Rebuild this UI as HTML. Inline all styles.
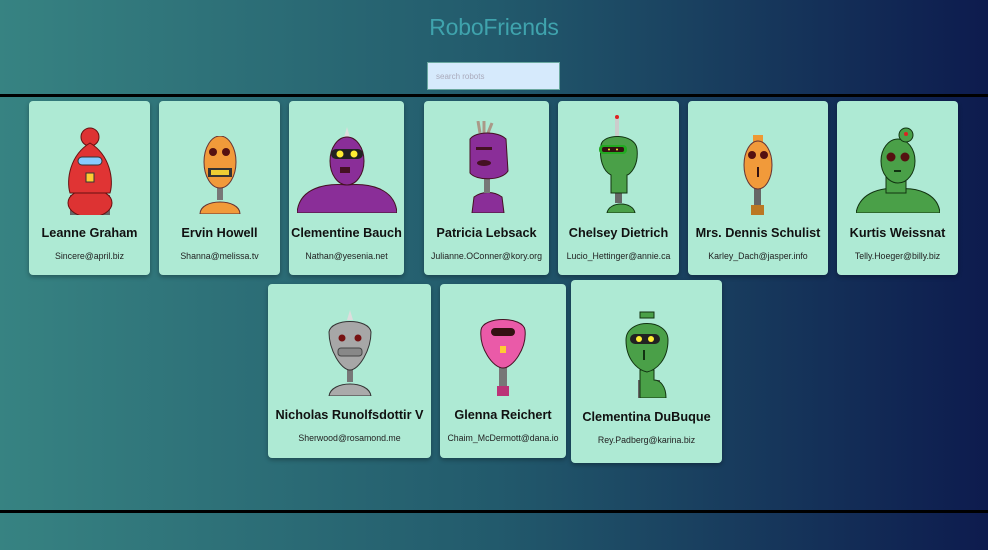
<!DOCTYPE html>
<html><head><meta charset="utf-8"><style>
*{margin:0;padding:0;box-sizing:border-box}
body{width:988px;height:550px;overflow:hidden;position:relative;font-family:"Liberation Sans",sans-serif;background:linear-gradient(90deg,#378382 0%,#225a6c 50%,#0d1b4e 100%)}
h1{position:absolute;top:14px;left:0;width:988px;text-align:center;font-weight:normal;font-size:23px;color:#3fa3ad;letter-spacing:-0.2px}
.search{position:absolute;left:427px;top:62px;width:133px;height:28px;background:#d6eafc;border:1px solid #6aa8a0;font-size:8px;color:#aab;padding:9px 8px}
.line{position:absolute;left:0;width:988px;height:3px;background:#000}
.card{position:absolute;background:#aeead4;border-radius:4px;box-shadow:0 2px 5px rgba(0,0,0,.3);text-align:center}
.card svg{position:absolute;left:50%;transform:translateX(-50%)}
.n{position:absolute;left:0;width:100%;font-weight:bold;font-size:12.7px;color:#111}
.e{position:absolute;left:0;width:100%;font-size:8.8px;color:#222}
</style></head><body>
<h1>RoboFriends</h1>
<div class="search">search robots</div>
<div class="line" style="top:94px"></div>
<div class="line" style="top:510px"></div>

<div class="card" style="left:29px;top:101px;width:121px;height:174px">
<svg style="top:24px" width="60" height="90" viewBox="0 0 60 90"><rect x="10" y="70" width="40" height="20" fill="#666"/><ellipse cx="30" cy="78" rx="22" ry="14" fill="#d33" stroke="#611"/><circle cx="30" cy="12" r="9" fill="#d33" stroke="#611"/><path d="M30 18 C10 30 6 55 10 68 L50 68 C54 55 50 30 30 18Z" fill="#e03434" stroke="#611"/><rect x="18" y="32" width="24" height="8" rx="4" fill="#8cf" stroke="#333"/><rect x="26" y="48" width="8" height="9" fill="#fc3" stroke="#333"/></svg>
<div class="n" style="top:125px">Leanne Graham</div><div class="e" style="top:150px">Sincere@april.biz</div></div>

<div class="card" style="left:159px;top:101px;width:121px;height:174px">
<svg style="top:35px" width="60" height="78" viewBox="0 0 60 78"><path d="M10 78 C10 62 50 62 50 78Z" fill="#f19a3a" stroke="#633"/><rect x="27" y="50" width="6" height="14" fill="#777"/><ellipse cx="30" cy="26" rx="16" ry="26" fill="#f19a3a" stroke="#633"/><circle cx="23" cy="16" r="4" fill="#511"/><circle cx="36" cy="16" r="4" fill="#511"/><rect x="18" y="32" width="24" height="9" fill="#333"/><rect x="21" y="34" width="18" height="5" fill="#ec3"/></svg>
<div class="n" style="top:125px">Ervin Howell</div><div class="e" style="top:150px">Shanna@melissa.tv</div></div>

<div class="card" style="left:289px;top:101px;width:115px;height:174px">
<svg style="top:26px" width="100" height="86" viewBox="0 0 100 86"><path d="M0 86 C2 60 30 56 50 58 C70 56 98 60 100 86Z" fill="#8a2e98" stroke="#412"/><path d="M46 14 L50 0 L54 14Z" fill="#ddd"/><ellipse cx="50" cy="34" rx="17" ry="24" fill="#8a2e98" stroke="#412"/><rect x="34" y="22" width="32" height="10" rx="5" fill="#222"/><circle cx="43" cy="27" r="3.5" fill="#fe3"/><circle cx="57" cy="27" r="3.5" fill="#fe3"/><rect x="43" y="40" width="10" height="6" fill="#412"/></svg>
<div class="n" style="top:125px">Clementine Bauch</div><div class="e" style="top:150px">Nathan@yesenia.net</div></div>

<div class="card" style="left:424px;top:101px;width:125px;height:174px">
<svg style="top:20px" width="50" height="92" viewBox="0 0 50 92"><path d="M10 92 L12 76 C20 70 32 70 40 76 L42 92Z" fill="#8a2e98" stroke="#412"/><rect x="22" y="56" width="6" height="16" fill="#777"/><path d="M18 12 L16 0 M22 12 L22 0 M26 12 L30 2" stroke="#a98" stroke-width="3"/><path d="M8 18 C14 10 36 10 44 18 L46 50 C40 60 14 60 8 52Z" fill="#8a2e98" stroke="#412"/><rect x="14" y="26" width="16" height="3" fill="#412"/><ellipse cx="22" cy="42" rx="7" ry="3" fill="#412"/></svg>
<div class="n" style="top:125px">Patricia Lebsack</div><div class="e" style="top:150px">Julianne.OConner@kory.org</div></div>

<div class="card" style="left:558px;top:101px;width:121px;height:174px">
<svg style="top:14px" width="60" height="98" viewBox="0 0 60 98"><path d="M18 98 C20 86 44 86 46 98Z" fill="#4aa048" stroke="#131"/><rect x="26" y="70" width="7" height="18" fill="#666"/><rect x="26" y="2" width="4" height="22" fill="#ccc"/><circle cx="28" cy="2" r="2" fill="#d22"/><path d="M12 30 C14 18 46 18 48 34 C50 52 40 60 38 60 L38 78 L22 78 L22 60 C14 56 10 44 12 30Z" fill="#4aa048" stroke="#131"/><rect x="10" y="30" width="28" height="9" rx="4" fill="#2a2"/><rect x="13" y="32" width="22" height="5" rx="2" fill="#311"/><circle cx="20" cy="34.5" r="1" fill="#fe3"/><circle cx="28" cy="34.5" r="1" fill="#fe3"/></svg>
<div class="n" style="top:125px">Chelsey Dietrich</div><div class="e" style="top:150px">Lucio_Hettinger@annie.ca</div></div>

<div class="card" style="left:688px;top:101px;width:140px;height:174px">
<svg style="top:34px" width="40" height="80" viewBox="0 0 40 80"><rect x="16" y="52" width="7" height="20" fill="#666"/><rect x="13" y="70" width="13" height="10" fill="#b72"/><rect x="15" y="0" width="10" height="8" fill="#e93"/><ellipse cx="20" cy="30" rx="14" ry="24" fill="#f19a3a" stroke="#633"/><circle cx="14" cy="20" r="4" fill="#511"/><circle cx="26" cy="20" r="4" fill="#511"/><rect x="19" y="32" width="2" height="10" fill="#311"/></svg>
<div class="n" style="top:125px">Mrs. Dennis Schulist</div><div class="e" style="top:150px">Karley_Dach@jasper.info</div></div>

<div class="card" style="left:837px;top:101px;width:121px;height:174px">
<svg style="top:24px" width="84" height="88" viewBox="0 0 84 88"><path d="M0 88 C4 66 28 62 42 64 C60 62 82 68 84 88Z" fill="#4aa048" stroke="#131"/><rect x="30" y="50" width="20" height="18" fill="#4aa048" stroke="#131"/><ellipse cx="42" cy="36" rx="17" ry="22" fill="#4aa048" stroke="#131"/><circle cx="50" cy="10" r="7" fill="#4aa048" stroke="#131"/><circle cx="50" cy="9" r="2" fill="#d22"/><circle cx="35" cy="32" r="4.5" fill="#511"/><circle cx="49" cy="32" r="4.5" fill="#511"/><rect x="38" y="45" width="7" height="2" fill="#131"/></svg>
<div class="n" style="top:125px">Kurtis Weissnat</div><div class="e" style="top:150px">Telly.Hoeger@billy.biz</div></div>

<div class="card" style="left:268px;top:284px;width:163px;height:174px">
<svg style="top:26px" width="50" height="86" viewBox="0 0 50 86"><path d="M4 86 C6 70 44 70 46 86Z" fill="#aaa" stroke="#333"/><rect x="22" y="58" width="6" height="14" fill="#777"/><path d="M22 10 L25 0 L28 10Z" fill="#ddd"/><path d="M4 22 C6 8 44 8 46 22 C46 40 34 60 25 60 C16 60 4 40 4 22Z" fill="#a7a7a7" stroke="#333"/><circle cx="17" cy="28" r="3.5" fill="#711"/><circle cx="33" cy="28" r="3.5" fill="#711"/><rect x="13" y="38" width="24" height="8" rx="3" fill="#888" stroke="#444"/></svg>
<div class="n" style="top:124px">Nicholas Runolfsdottir V</div><div class="e" style="top:149px">Sherwood@rosamond.me</div></div>

<div class="card" style="left:440px;top:284px;width:126px;height:174px">
<svg style="top:28px" width="56" height="84" viewBox="0 0 56 84"><rect x="24" y="52" width="8" height="24" fill="#777"/><rect x="22" y="74" width="12" height="10" fill="#b37"/><path d="M6 18 C8 4 48 4 50 18 C52 36 38 56 28 56 C18 56 4 36 6 18Z" fill="#ea5aa8" stroke="#412"/><rect x="16" y="16" width="24" height="8" rx="4" fill="#311"/><rect x="25" y="34" width="6" height="7" fill="#fc3"/></svg>
<div class="n" style="top:124px">Glenna Reichert</div><div class="e" style="top:149px">Chaim_McDermott@dana.io</div></div>

<div class="card" style="left:571px;top:280px;width:151px;height:183px">
<svg style="top:30px" width="54" height="88" viewBox="0 0 54 88"><rect x="18" y="70" width="22" height="18" fill="#666"/><path d="M20 60 L20 88 L46 88 C46 76 40 70 34 70 L34 60Z" fill="#4aa048" stroke="#131"/><rect x="20" y="2" width="14" height="6" fill="#4aa048" stroke="#131"/><path d="M6 30 C6 8 48 8 48 30 C48 50 36 60 27 62 C18 60 6 50 6 30Z" fill="#4aa048" stroke="#131"/><rect x="10" y="24" width="30" height="10" rx="5" fill="#222"/><circle cx="19" cy="29" r="3" fill="#fe3"/><circle cx="31" cy="29" r="3" fill="#fe3"/><rect x="23" y="40" width="2" height="10" fill="#131"/></svg>
<div class="n" style="top:130px">Clementina DuBuque</div><div class="e" style="top:155px">Rey.Padberg@karina.biz</div></div>
</body></html>
